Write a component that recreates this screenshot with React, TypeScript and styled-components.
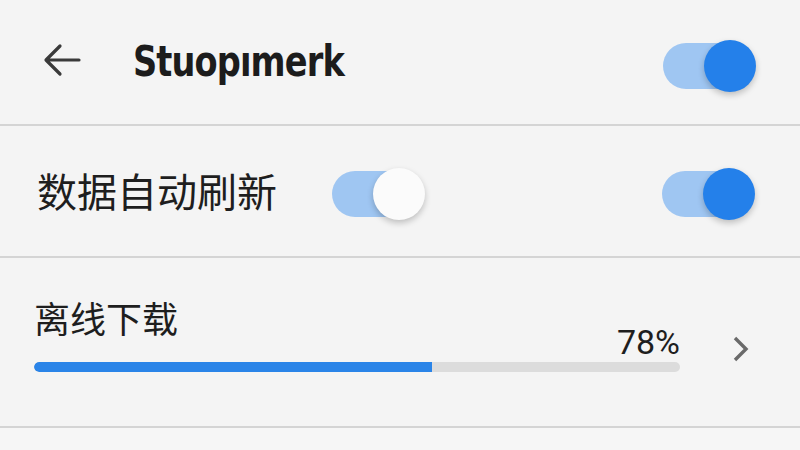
import React from 'react';
import styled, { createGlobalStyle } from 'styled-components';

const GlobalStyle = createGlobalStyle`
  html, body {
    margin: 0;
    padding: 0;
    background: #f6f6f6;
  }
  body {
    width: 800px;
    height: 450px;
    overflow: hidden;
    font-family: "Noto Sans", "Noto Sans CJK SC", sans-serif;
  }
`;

interface ToggleProps {
  knob: 'blue' | 'white';
}

const Toggle = ({ knob }: ToggleProps) => (
  <Switch>
    <Track />
    <Knob $knob={knob} />
  </Switch>
);

const BackArrow = () => (
  <svg width="38" height="34" viewBox="0 0 38 34" fill="none">
    <path
      d="M36 17H4M17 3L3 17l14 14"
      stroke="#3a3a3a"
      strokeWidth="3.2"
      strokeLinecap="round"
      strokeLinejoin="round"
    />
  </svg>
);

const Chevron = () => (
  <svg width="18" height="28" viewBox="0 0 18 28" fill="none">
    <path d="M3 3l11 11L3 25" stroke="#6a6a6a" strokeWidth="3.4" strokeLinejoin="miter" />
  </svg>
);

export default function App() {
  const progress = 61.6;

  return (
    <>
      <GlobalStyle />
      <Page>
        <Header>
          <BackButton>
            <BackArrow />
          </BackButton>
          <Title>Stuopımerk</Title>
          <Push />
          <Toggle knob="blue" />
        </Header>

        <Row>
          <Label>数据自动刷新</Label>
          <InlineSwitch>
            <Toggle knob="white" />
          </InlineSwitch>
          <Push />
          <Toggle knob="blue" />
        </Row>

        <DownloadRow>
          <Label $small>离线下载</Label>
          <ProgressLine>
            <ProgressBlock>
              <Percent>78%</Percent>
              <Bar>
                <Fill style={{ width: `${progress}%` }} />
              </Bar>
            </ProgressBlock>
            <ChevronSlot>
              <Chevron />
            </ChevronSlot>
          </ProgressLine>
        </DownloadRow>
      </Page>
    </>
  );
}

const Page = styled.main`
  display: flex;
  flex-direction: column;
  background: #f4f4f4;
`;

const Header = styled.header`
  display: flex;
  align-items: center;
  box-sizing: border-box;
  height: 126px;
  padding: 8px 44px 0 43px;
  border-bottom: 2px solid #d4d4d4;
`;

const BackButton = styled.div`
  display: flex;
  width: 38px;
  height: 34px;
  margin-top: -12px;
`;

const Title = styled.h1`
  margin: -10px 0 0 52px;
  font-family: "DejaVu Sans Condensed", "DejaVu Sans", sans-serif;
  font-weight: 700;
  font-size: 42px;
  letter-spacing: -1px;
  color: #1c1c1c;
  transform: scaleX(0.89);
  transform-origin: left center;
`;

const Push = styled.div`
  flex: 1;
`;

const Row = styled.section`
  display: flex;
  align-items: center;
  height: 132px;
  box-sizing: border-box;
  padding: 6px 45px 0 37px;
  border-bottom: 2px solid #d4d4d4;
`;

const Label = styled.div<{ $small?: boolean }>`
  font-family: "Noto Sans CJK SC", sans-serif;
  font-size: ${(p) => (p.$small ? '36px' : '40px')};
  line-height: 1.2;
  color: #1e1e1e;
  margin-top: ${(p) => (p.$small ? '0' : '-8px')};
`;

const InlineSwitch = styled.div`
  margin-left: 55px;
`;

const Switch = styled.div`
  position: relative;
  width: 93px;
  height: 52px;
  flex: none;
`;

const Track = styled.div`
  position: absolute;
  left: 0;
  top: 3px;
  width: 84px;
  height: 46px;
  border-radius: 23px;
  background: #9fc6f2;
`;

const Knob = styled.div<{ $knob: 'blue' | 'white' }>`
  position: absolute;
  right: 0;
  top: 0;
  width: 52px;
  height: 52px;
  border-radius: 50%;
  background: ${(p) => (p.$knob === 'blue' ? '#2480ea' : '#fbfbfb')};
  box-shadow: 0 3px 6px rgba(0, 0, 0, 0.22);
`;

const DownloadRow = styled.section`
  display: flex;
  flex-direction: column;
  height: 170px;
  box-sizing: border-box;
  padding: 38px 50px 0 34px;
  border-bottom: 2px solid #d4d4d4;
`;

const ProgressLine = styled.div`
  display: flex;
  align-items: center;
  margin-top: -17px;
`;

const ProgressBlock = styled.div`
  display: flex;
  flex-direction: column;
  width: 646px;
`;

const Percent = styled.div`
  align-self: flex-end;
  font-family: Roboto, "Liberation Sans", sans-serif;
  font-size: 34px;
  line-height: 40px;
  color: #1e1e1e;
`;

const Bar = styled.div`
  height: 10px;
  border-radius: 5px;
  background: #dcdcdc;
  overflow: hidden;
`;

const Fill = styled.div`
  height: 100%;
  border-radius: 5px 0 0 5px;
  background: #2a84e8;
`;

const ChevronSlot = styled.div`
  display: flex;
  margin-left: 52px;
  margin-top: 4px;
`;
